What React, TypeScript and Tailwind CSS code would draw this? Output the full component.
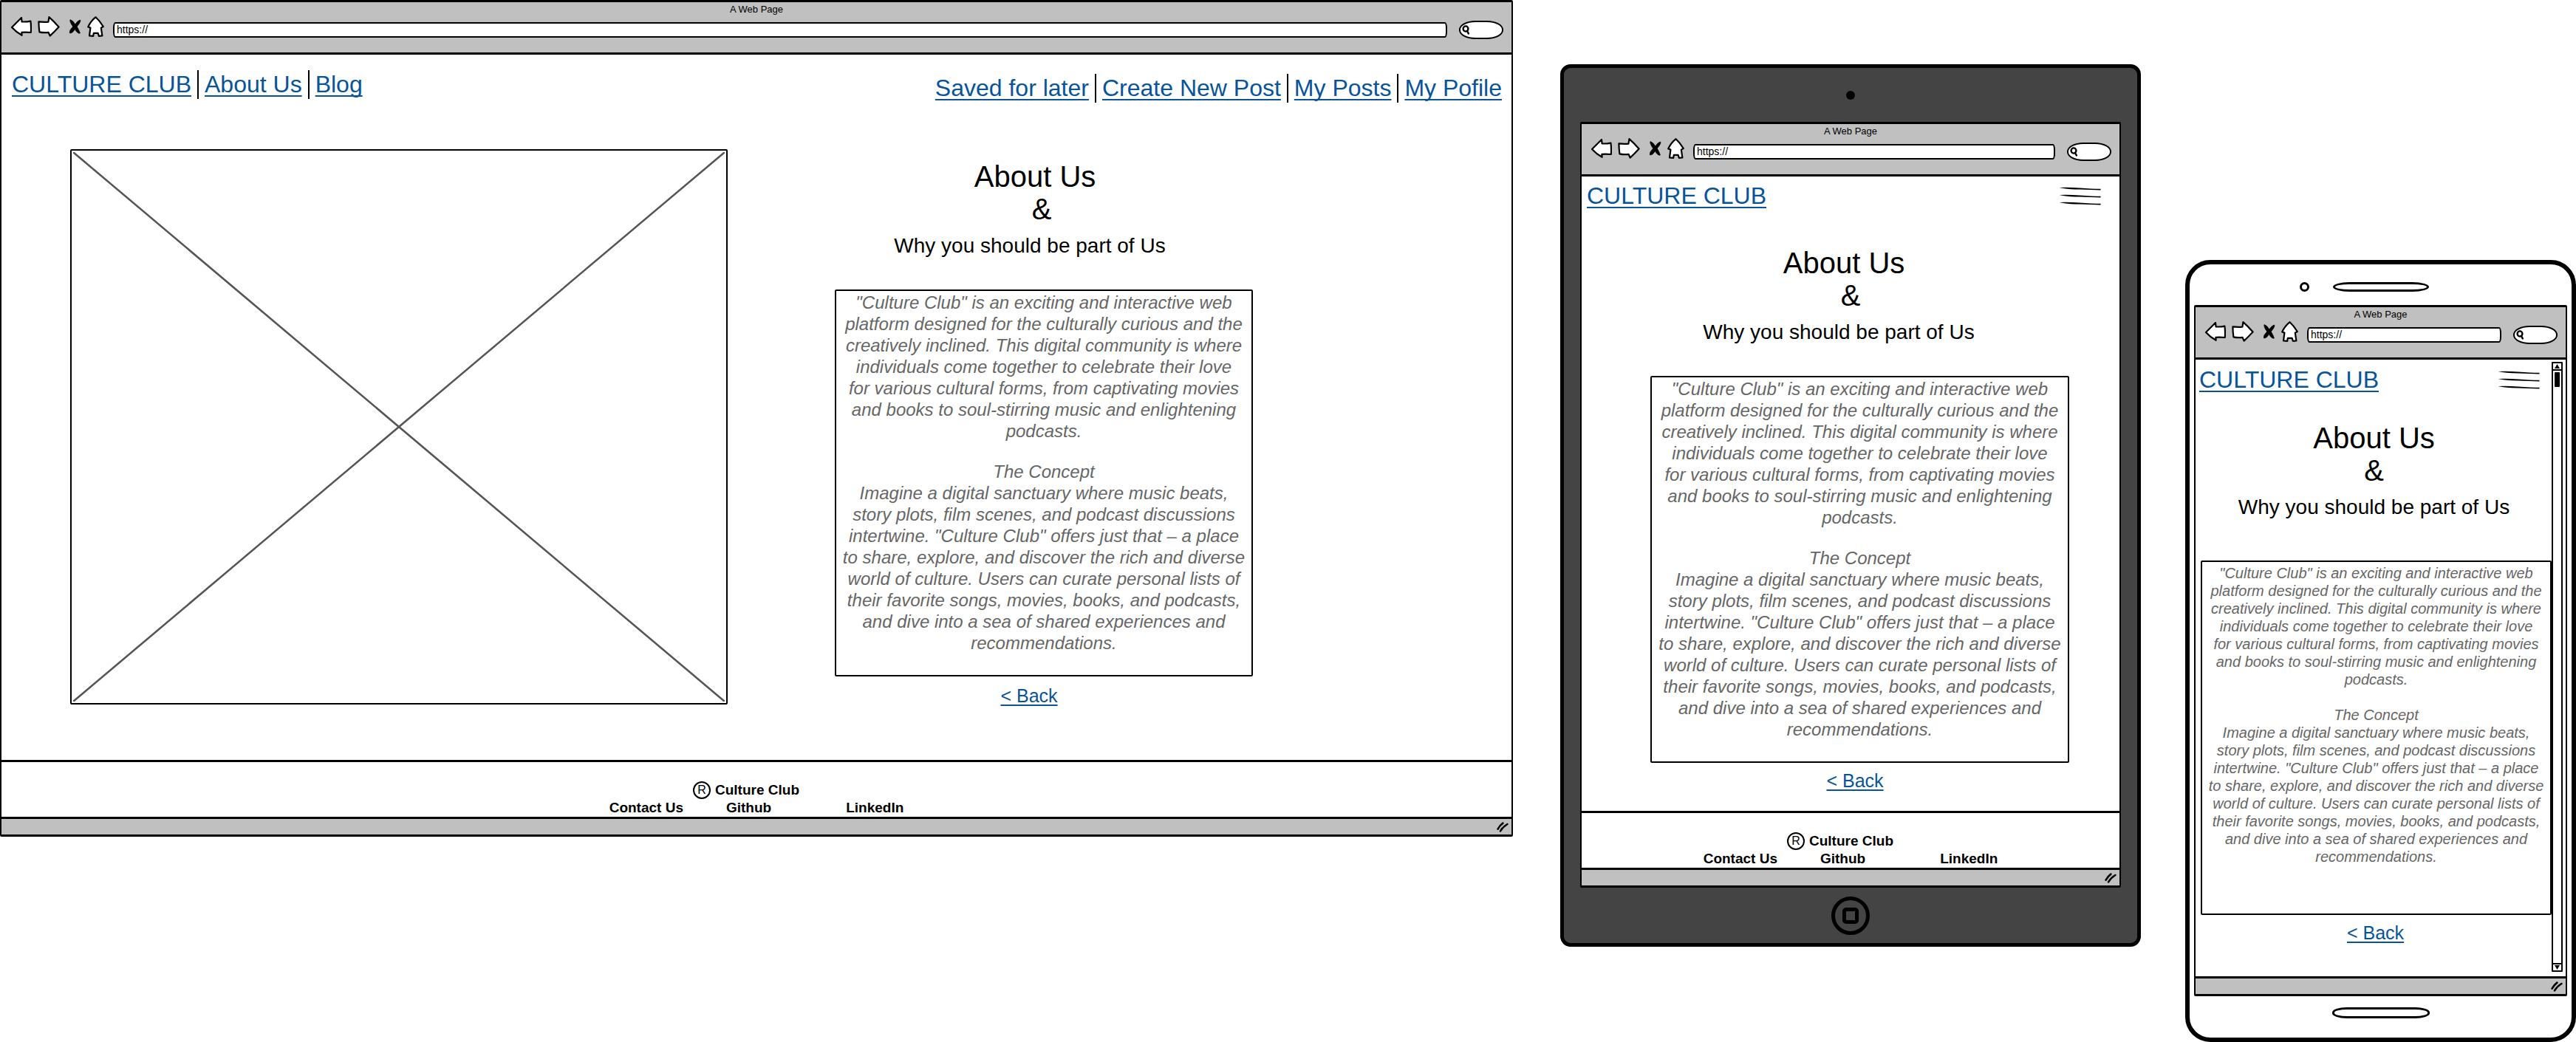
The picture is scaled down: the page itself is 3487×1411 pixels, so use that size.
import React from "react";

const CONCEPT_INTRO = [
  '"Culture Club" is an exciting and interactive web',
  "platform designed for the culturally curious and the",
  "creatively inclined. This digital community is where",
  "individuals come together to celebrate their love",
  "for various cultural forms, from captivating movies",
  "and books to soul-stirring music and enlightening",
  "podcasts.",
];

const CONCEPT_BODY = [
  "Imagine a digital sanctuary where music beats,",
  "story plots, film scenes, and podcast discussions",
  'intertwine. "Culture Club" offers just that – a place',
  "to share, explore, and discover the rich and diverse",
  "world of culture. Users can curate personal lists of",
  "their favorite songs, movies, books, and podcasts,",
  "and dive into a sea of shared experiences and",
  "recommendations.",
];

function BackIcon() {
  return (
    <svg width="28" height="26" viewBox="0 0 28 26" fill="#fff" stroke="#000" strokeWidth="2.2" strokeLinejoin="round" aria-hidden="true">
      <path d="M1 14 L14 1 L14.6 6.4 Q21 6.8 26.4 5.6 Q27.4 13 26.8 21 Q20 20.2 14.4 20.8 L14.6 24.8 Q7 20.5 1 14 Z" />
    </svg>
  );
}

function ForwardIcon() {
  return (
    <svg width="30" height="28" viewBox="0 0 30 28" fill="#fff" stroke="#000" strokeWidth="2.2" strokeLinejoin="round" aria-hidden="true">
      <path d="M1.4 7.4 Q8 8.2 14.4 7.6 L15.4 1.2 Q22 7 28.6 14.4 Q23 20.6 16.6 26.6 L14.6 21.8 Q8 22.8 2.4 21.4 Q1.4 14 1.4 7.4 Z" />
    </svg>
  );
}

function StopIcon() {
  return (
    <svg width="17" height="20" viewBox="0 0 17 20" fill="#000" stroke="#000" strokeWidth="0.8" strokeLinejoin="round" aria-hidden="true">
      <path d="M2 0.6 Q6 2 8.8 7 Q12 2 15.6 1 Q17 3 11.2 10 Q14 14.6 15.4 19 Q12 20 8.4 13.6 Q5 19.4 1.4 18.8 Q0.6 15 5.8 10 Q1 3.6 2 0.6 Z" />
    </svg>
  );
}

function HomeIcon() {
  return (
    <svg width="23" height="28" viewBox="0 0 23 28" fill="#fff" stroke="#000" strokeWidth="2.2" strokeLinejoin="round" aria-hidden="true">
      <path d="M11.6 1.2 Q17 6 21.8 14 L18.8 15.6 L20.4 26.4 L15.8 26.8 L14.6 22.8 L8.8 22.8 L8.2 26.8 L3 26.4 L4.4 15.6 L1.2 14.4 Q5 6.4 11.6 1.2 Z" />
    </svg>
  );
}

function MenuIcon() {
  return (
    <svg width="57" height="25" viewBox="0 0 57 25" fill="#000" aria-hidden="true">
      <path d="M0.5 1 Q12 0.4 28 1.4 Q44 2.6 56.5 2.8 L56.5 4.4 Q44 4.4 28 3.6 Q10 3.2 0.5 1 Z" />
      <path d="M0.5 11 Q12 10.4 28 11.4 Q44 12.6 56.5 12.8 L56.5 14.4 Q44 14.4 28 13.6 Q10 13.2 0.5 11 Z" />
      <path d="M0.5 21 Q12 20.4 28 21.4 Q44 22.6 56.5 22.8 L56.5 24.4 Q44 24.4 28 23.6 Q10 23.2 0.5 21 Z" />
    </svg>
  );
}

function Browser({ id, children }: { id: string; children: React.ReactNode }) {
  return (
    <section className="flex flex-col rounded-[2px] border-x-2 border-y-[3px] border-black bg-white px-px">
      <div className="-mx-px flex h-[71px] flex-col border-b-[3px] border-black bg-[#c0c0c0]">
        <div className="pt-0.5 text-center text-[13px] leading-4">A Web Page</div>
        <div className="flex h-[30px] items-center pr-[11px] pl-[13px]">
          <button type="button" aria-label="Back" className="mr-2"><BackIcon /></button>
          <button type="button" aria-label="Forward" className="mr-3"><ForwardIcon /></button>
          <button type="button" aria-label="Stop" className="mr-2"><StopIcon /></button>
          <button type="button" aria-label="Home" className="mr-3"><HomeIcon /></button>
          <input
            type="text"
            aria-label="Address"
            id={`${id}-address`}
            defaultValue="https://"
            className="mt-2 h-[21px] min-w-0 flex-1 rounded-[3px/8px] border-2 border-black bg-white px-[3px] text-[14px] leading-4"
          />
          <label className="mt-2 ml-4 flex h-[25px] w-[60px] items-center rounded-[22px/12px] border-2 border-black bg-white pl-0.5">
            <svg width="11" height="13" viewBox="0 0 11 13" fill="none" stroke="#000" strokeWidth="2.4" strokeLinecap="round" aria-hidden="true">
              <ellipse cx="5" cy="5" rx="3.4" ry="3.6" />
              <path d="M7 8 L8.8 11.4" />
            </svg>
            <input type="search" aria-label="Search" className="w-8 min-w-0 bg-transparent text-[13px] outline-none" />
          </label>
        </div>
      </div>
      {children}
      <div className="-mx-px flex h-[24px] items-center justify-end border-t-[3px] border-black bg-[#c0c0c0] pr-1">
        <svg width="16" height="14" viewBox="0 0 16 14" fill="none" stroke="#000" strokeWidth="2.6" strokeLinecap="round" aria-hidden="true">
          <path d="M1.6 9.6 Q4 5 8.4 1.6" />
          <path d="M5 12.4 Q8.6 6.4 14.4 3" />
        </svg>
      </div>
    </section>
  );
}

function NavLink({ children }: { children: string }) {
  return (
    <a
      href="#"
      className="text-[32px] leading-[39px] whitespace-nowrap text-[#07549a] underline decoration-2 underline-offset-4 [text-decoration-skip-ink:none]"
    >
      {children}
    </a>
  );
}

function NavGroup({ items, label }: { items: string[]; label: string }) {
  return (
    <nav aria-label={label} className="flex gap-2">
      {items.map((item, i) => (
        <React.Fragment key={item}>
          {i > 0 && <span className="h-[39px] w-0.5 bg-black" />}
          <NavLink>{item}</NavLink>
        </React.Fragment>
      ))}
    </nav>
  );
}

function MobileNav({ className }: { className: string }) {
  return (
    <header className={`flex items-center justify-between ${className}`}>
      <NavLink>CULTURE CLUB</NavLink>
      <button type="button" aria-label="Menu"><MenuIcon /></button>
    </header>
  );
}

function Heading({ shifted }: { shifted: boolean }) {
  return (
    <div className="text-center">
      <h1 className="text-[40px] leading-[44px]">
        <span className={`block ${shifted ? "pr-[18px]" : ""}`}>About Us</span>
        <span className="block">&amp;</span>
      </h1>
      <h2 className={`mt-3 text-[28px] leading-8 whitespace-nowrap ${shifted ? "pr-8" : ""}`}>
        Why you should be part of Us
      </h2>
    </div>
  );
}

function Lines({ lines }: { lines: string[] }) {
  return (
    <>
      {lines.map((line) => (
        <span key={line} className="block">{line}{" "}</span>
      ))}
    </>
  );
}

function Article({ small = false }: { small?: boolean }) {
  return (
    <article
      className={`rounded-[2px] border-2 border-black text-center whitespace-nowrap text-[#666] italic ${
        small ? "pt-[3px] pb-[65px] text-[20px] leading-6" : "pt-px pb-[29px] text-[24px] leading-[29px]"
      }`}
    >
      <p><Lines lines={CONCEPT_INTRO} /></p>
      <h3 className={small ? "mt-6" : "mt-[26px]"}>The Concept</h3>
      <p><Lines lines={CONCEPT_BODY} /></p>
    </article>
  );
}

function BackLink() {
  return (
    <a
      href="#"
      className="text-[25px] leading-[29px] text-[#07549a] underline decoration-2 underline-offset-3"
    >
      &lt; Back
    </a>
  );
}

function Footer() {
  return (
    <footer className="-mx-px border-t-[3px] border-black pt-[26px] text-[19px] leading-6 font-bold">
      <div className="flex items-center justify-center gap-1.5 pr-7">
        <span className="flex size-6 items-center justify-center rounded-full border-2 border-black text-[16px] leading-none font-normal">
          R
        </span>
        <span>Culture Club</span>
      </div>
      <div className="flex justify-center">
        <a href="#" className="mr-[58px]">Contact Us</a>
        <a href="#" className="mr-[101px]">Github</a>
        <a href="#">LinkedIn</a>
      </div>
    </footer>
  );
}

function Desktop() {
  return (
    <div className="min-w-0">
      <Browser id="desktop">
        <header className="flex items-start justify-between pt-[21px] pr-3 pl-[13px]">
          <NavGroup label="Site" items={["CULTURE CLUB", "About Us", "Blog"]} />
          <div className="pt-[5px]">
            <NavGroup label="Account" items={["Saved for later", "Create New Post", "My Posts", "My Pofile"]} />
          </div>
        </header>
        <main className="grid grid-cols-[890fr_566fr] items-start gap-[145px] pt-[63px] pr-[349px] pb-[72px] pl-[92px]">
          <div className="relative h-[752px] rounded-[2px] border-2 border-black">
            <svg className="absolute inset-0 size-full p-0.5" viewBox="0 0 100 100" preserveAspectRatio="none" stroke="#555" strokeWidth="2.5" aria-label="Image placeholder" role="img">
              <line x1="0" y1="0" x2="100" y2="100" vectorEffect="non-scaling-stroke" />
              <line x1="100" y1="0" x2="0" y2="100" vectorEffect="non-scaling-stroke" />
            </svg>
          </div>
          <div className="pt-[15px]">
            <div className="pr-1.5"><Heading shifted /></div>
            <div className="mt-[43px]"><Article /></div>
            <div className="mt-3 flex justify-center pr-10"><BackLink /></div>
          </div>
        </main>
        <Footer />
      </Browser>
    </div>
  );
}

function Tablet() {
  return (
    <div className="mt-[87px] ml-16 flex min-w-0 flex-col rounded-[14px] border-[5px] border-black bg-[#444] px-[22px]">
      <div className="flex h-[73px] items-center justify-center">
        <span className="size-3 rounded-full bg-black" />
      </div>
      <Browser id="tablet">
        <MobileNav className="pt-[7px] pr-6 pl-1.5" />
        <main className="pt-[49px] pb-[26px]">
          <Heading shifted />
          <div className="mt-[43px] pr-[67px] pl-[92px]"><Article /></div>
          <div className="mt-2.5 flex justify-center pl-3"><BackLink /></div>
        </main>
        <Footer />
      </Browser>
      <div className="flex h-[75px] items-center justify-center">
        <button type="button" aria-label="Home button" className="flex size-[52px] items-center justify-center rounded-full border-[5px] border-black">
          <span className="size-[22px] rounded-[5px] border-[5px] border-black" />
        </button>
      </div>
    </div>
  );
}

function ScrollBar() {
  return (
    <div className="mt-[3px] mr-[3px] mb-1.5 flex w-[15px] flex-col items-stretch rounded-[1px] border-2 border-black">
      <button type="button" aria-label="Scroll up" className="flex h-2.5 items-center justify-center border-b-2 border-black">
        <svg width="7" height="6" viewBox="0 0 7 6" aria-hidden="true"><path d="M3.5 0 L7 6 L0 6 Z" /></svg>
      </button>
      <div className="flex-1 px-0.5 pt-0.5">
        <div className="h-5 rounded-[1px] bg-black" />
      </div>
      <button type="button" aria-label="Scroll down" className="flex h-2.5 items-center justify-center border-t-2 border-black">
        <svg width="7" height="6" viewBox="0 0 7 6" aria-hidden="true"><path d="M0 0 L7 0 L3.5 6 Z" /></svg>
      </button>
    </div>
  );
}

function Phone() {
  return (
    <div className="mt-[352px] ml-[60px] flex min-w-0 flex-col rounded-[34px] border-[6px] border-black bg-white px-1.5">
      <div className="grid h-[55px] grid-cols-[1fr_130px_1fr] items-center pt-1.5">
        <span className="mr-8 size-[13px] justify-self-end rounded-full border-[3px] border-black" />
        <span className="h-[13px] rounded-[24px/7px] border-[3px] border-black" />
      </div>
      <Browser id="phone">
        <div className="flex">
          <div className="min-w-0 flex-1">
            <MobileNav className="pt-2 pr-4 pl-1" />
            <main className="pt-[37px] pb-11">
              <Heading shifted={false} />
              <div className="mt-14 pl-1.5"><Article small /></div>
              <div className="mt-2.5 flex justify-center pl-1"><BackLink /></div>
            </main>
          </div>
          <ScrollBar />
        </div>
      </Browser>
      <div className="flex h-14 justify-center pt-[15px]">
        <span className="h-[15px] w-[132px] rounded-[20px/7px] border-[3px] border-black" />
      </div>
    </div>
  );
}

export default function App() {
  return (
    <div className="grid grid-cols-[2048fr_850fr_589fr] items-start bg-white font-['Liberation_Sans',Arial,sans-serif] text-black">
      <Desktop />
      <Tablet />
      <Phone />
    </div>
  );
}
